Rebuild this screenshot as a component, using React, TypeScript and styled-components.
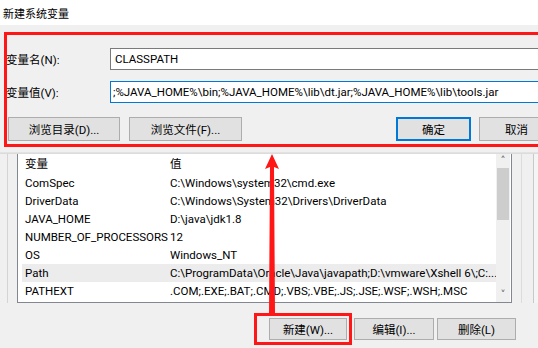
import React from "react";
import styled, { createGlobalStyle } from "styled-components";

const GlobalStyle = createGlobalStyle`
  html, body {
    margin: 0;
    padding: 0;
    background: #f0f0f0;
  }
  * {
    box-sizing: border-box;
  }
`;

const rows = [
  { name: "ComSpec", value: "C:\\Windows\\system32\\cmd.exe" },
  { name: "DriverData", value: "C:\\Windows\\System32\\Drivers\\DriverData" },
  { name: "JAVA_HOME", value: "D:\\java\\jdk1.8" },
  { name: "NUMBER_OF_PROCESSORS", value: "12" },
  { name: "OS", value: "Windows_NT" },
  { name: "Path", value: "C:\\ProgramData\\Oracle\\Java\\javapath;D:\\vmware\\Xshell 6\\;C:...", selected: true },
  { name: "PATHEXT", value: ".COM;.EXE;.BAT;.CMD;.VBS;.VBE;.JS;.JSE;.WSF;.WSH;.MSC" },
];

export default function App() {
  return (
    <>
      <GlobalStyle />
      <Page>
        <TitleBar>新建系统变量</TitleBar>
        <Dialog>
          <FieldRow>
            <FieldLabel>变量名(N):</FieldLabel>
            <FieldInput>CLASSPATH</FieldInput>
          </FieldRow>
          <FieldRow>
            <FieldLabel>变量值(V):</FieldLabel>
            <FieldInput $focused>
              ;%JAVA_HOME%\bin;%JAVA_HOME%\lib\dt.jar;%JAVA_HOME%\lib\tools.jar
            </FieldInput>
          </FieldRow>
          <DialogButtons>
            <Btn $w={112}>浏览目录(D)...</Btn>
            <Btn $w={113} $ml={9}>浏览文件(F)...</Btn>
            <Btn $w={75} $ml={154} $primary>确定</Btn>
            <Btn $w={75} $ml={8}>取消</Btn>
          </DialogButtons>
        </Dialog>
        <DialogShadow />
        <BackWindow>
          <ListArea>
            <LeftGutter />
            <ListBox>
              <ListBody>
                <HeaderRow>
                  <NameCell>变量</NameCell>
                  <ValueCell>值</ValueCell>
                </HeaderRow>
                {rows.map((r) => (
                  <ListRow key={r.name} $selected={r.selected}>
                    <NameCell>{r.name}</NameCell>
                    <ValueCell>{r.value}</ValueCell>
                  </ListRow>
                ))}
              </ListBody>
              <ScrollBar>
                <ScrollArrow>˄</ScrollArrow>
                <ScrollThumb />
                <ScrollTrack />
                <ScrollArrow>˅</ScrollArrow>
              </ScrollBar>
            </ListBox>
            <RightGutter>
              <RightEdge />
            </RightGutter>
          </ListArea>
          <BottomButtons>
            <Btn $w={78} $h={22}>新建(W)...</Btn>
            <Btn $w={80} $h={22} $ml={7}>编辑(I)...</Btn>
            <Btn $w={79} $h={22} $ml={3}>删除(L)</Btn>
          </BottomButtons>
        </BackWindow>

        <RedBox $x={4} $y={32} $w={545} $h={115} />
        <RedBox $x={254} $y={313} $w={98} $h={32} />
        <Arrow width="20" height="166" viewBox="0 0 20 166">
          <polygon
            points="10,4 3,19 8,17 7,164 13,164 12,17 17,19"
            fill="#ff1616"
          />
        </Arrow>
      </Page>
    </>
  );
}

const Page = styled.div`
  position: relative;
  width: 538px;
  height: 348px;
  overflow: hidden;
  display: flex;
  flex-direction: column;
  background: #f0f0f0;
  font-family: Roboto, "Noto Sans CJK SC", sans-serif;
  font-size: 11.5px;
  color: #000;
`;

const TitleBar = styled.div`
  height: 25px;
  flex-shrink: 0;
  background: #fff;
  padding-left: 3px;
  display: flex;
  align-items: center;
  font-size: 11px;
`;

const Dialog = styled.div`
  height: 127px;
  flex-shrink: 0;
  background: #f0f0f0;
  padding: 23px 0 0 0;
  display: flex;
  flex-direction: column;
`;

const FieldRow = styled.div`
  display: flex;
  align-items: center;
  height: 22px;
  margin-bottom: 11px;
`;

const FieldLabel = styled.div`
  width: 110px;
  padding-left: 6px;
  flex-shrink: 0;
`;

const FieldInput = styled.div<{ $focused?: boolean }>`
  width: 440px;
  height: 22px;
  flex-shrink: 0;
  background: #fff;
  border: 1px solid ${(p) => (p.$focused ? "#0078d7" : "#7a7a7a")};
  padding-left: ${(p) => (p.$focused ? "2px" : "4px")};
  display: flex;
  align-items: center;
  white-space: nowrap;
  overflow: hidden;
`;

const DialogButtons = styled.div`
  display: flex;
  align-items: center;
  padding-left: 8px;
  margin-top: 3px;
  width: 570px;
`;

const Btn = styled.div<{ $w: number; $h?: number; $primary?: boolean; $ml?: number }>`
  width: ${(p) => p.$w}px;
  height: ${(p) => p.$h ?? 24}px;
  flex-shrink: 0;
  margin-left: ${(p) => p.$ml ?? 0}px;
  background: #e1e1e1;
  border: ${(p) => (p.$primary ? "2px solid #0078d7" : "1px solid #adadad")};
  display: flex;
  align-items: center;
  justify-content: center;
  white-space: nowrap;
`;

const DialogShadow = styled.div`
  height: 2px;
  flex-shrink: 0;
  background: linear-gradient(#e6e6e6, #d8d8d8);
`;

const BackWindow = styled.div`
  flex: 1;
  display: flex;
  flex-direction: column;
`;

const ListArea = styled.div`
  display: flex;
  height: 149px;
`;

const LeftGutter = styled.div`
  width: 17px;
  flex-shrink: 0;
  border-left: 7px solid #f0f0f0;
  box-shadow: inset 1px 0 0 #d4d4d4;
`;

const ListBox = styled.div`
  width: 495px;
  flex-shrink: 0;
  display: flex;
  background: #fff;
  border-left: 1px solid #828790;
  border-right: 1px solid #828790;
  border-bottom: 1px solid #828790;
`;

const ListBody = styled.div`
  flex: 1;
  padding: 0 0 0 4px;
  overflow: hidden;
`;

const HeaderRow = styled.div`
  display: flex;
  align-items: center;
  height: 18px;
  margin-bottom: 2px;
`;

const ListRow = styled.div<{ $selected?: boolean }>`
  display: flex;
  align-items: center;
  height: 18px;
  background: ${(p) => (p.$selected ? "#ececec" : "transparent")};
`;

const NameCell = styled.div`
  width: 148px;
  flex-shrink: 0;
  padding-left: 3px;
  white-space: nowrap;
`;

const ValueCell = styled.div`
  flex: 1;
  white-space: nowrap;
  overflow: hidden;
`;

const ScrollBar = styled.div`
  width: 14px;
  flex-shrink: 0;
  margin-right: 1px;
  background: #f0f0f0;
  display: flex;
  flex-direction: column;
`;

const ScrollArrow = styled.div`
  height: 14px;
  display: flex;
  align-items: center;
  justify-content: center;
  color: #606060;
  font-family: "DejaVu Sans", sans-serif;
  font-size: 10px;
  line-height: 1;
`;

const ScrollThumb = styled.div`
  height: 52px;
  margin: 0 1px;
  background: #cdcdcd;
`;

const ScrollTrack = styled.div`
  flex: 1;
`;

const RightGutter = styled.div`
  flex: 1;
  border-left: 9px solid #f0f0f0;
  box-shadow: inset 1px 0 0 #dcdcdc;
  display: flex;
  justify-content: flex-end;
`;

const RightEdge = styled.div`
  width: 5px;
  border-left: 1px solid #c8c8c8;
  background: #f4f4f4;
`;

const BottomButtons = styled.div`
  display: flex;
  padding: 15px 0 0 269px;
`;

const RedBox = styled.div<{ $x: number; $y: number; $w: number; $h: number }>`
  position: absolute;
  left: ${(p) => p.$x}px;
  top: ${(p) => p.$y}px;
  width: ${(p) => p.$w}px;
  height: ${(p) => p.$h}px;
  border: 3px solid #ff1616;
  pointer-events: none;
`;

const Arrow = styled.svg`
  position: absolute;
  left: 262px;
  top: 150px;
`;
